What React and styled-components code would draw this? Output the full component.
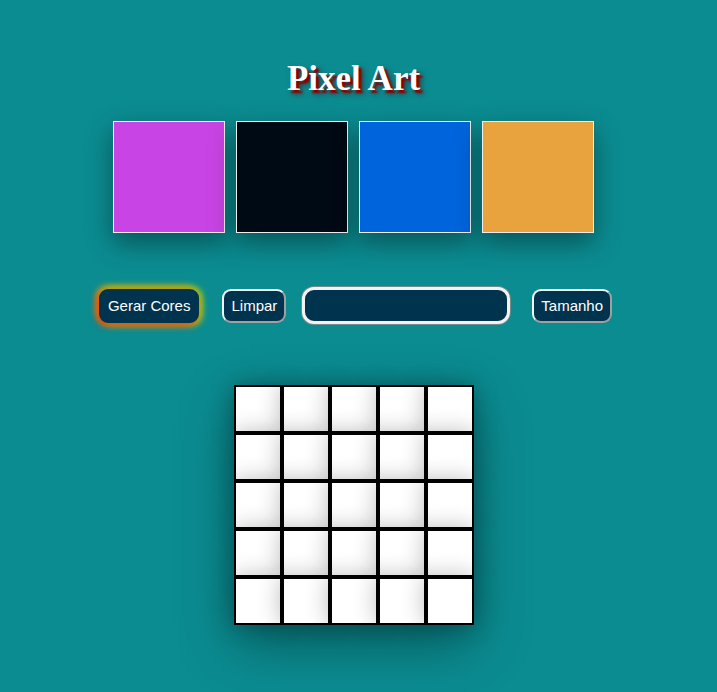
import React from 'react';
import styled, { createGlobalStyle } from 'styled-components';

const GlobalStyle = createGlobalStyle`
  html, body {
    margin: 0;
    padding: 0;
    background-color: #0b8c91;
  }
`;

const Page = styled.div`
  box-sizing: border-box;
  min-height: 100vh;
  padding: 59px 10px 0 0;
  display: flex;
  flex-direction: column;
  align-items: center;
`;

const Title = styled.h1`
  margin: 0 0 22px;
  font-family: 'Liberation Serif', 'Times New Roman', serif;
  font-size: 35px;
  line-height: 40px;
  font-weight: bold;
  color: #fff;
  text-shadow: 3px 3px 2px #8b0000, 4px 4px 6px rgba(60, 0, 0, 0.6);
`;

const Palette = styled.div`
  display: flex;
  gap: 11px;
`;

const ColorBox = styled.div`
  width: 110px;
  height: 110px;
  border: 1px solid #eee;
  background-color: ${(p) => p.$color};
  box-shadow: 0 10px 25px rgba(0, 0, 0, 0.4);
`;

const Controls = styled.div`
  display: flex;
  align-items: center;
  margin: 54px 0 0 4px;
`;

const Button = styled.button`
  margin: 0 ${(p) => p.$gap || 0}px 0 0;
  padding: 7px 7px;
  font-family: 'Liberation Sans', Arial, sans-serif;
  font-size: 15px;
  line-height: 16px;
  color: #fff;
  background-color: #00334e;
  border: 2px solid;
  border-color: ${(p) => (p.$glow ? '#00334e' : '#f4f4f4 #a0a0a0 #a0a0a0 #f4f4f4')};
  border-radius: 9px;
  cursor: pointer;
  box-shadow: ${(p) =>
    p.$glow
      ? '-2px 2px 7px #ff3000, 2px -2px 7px #86d81c, -2px -2px 7px #ff9a00, 2px 2px 7px #d8c800'
      : 'none'};
`;

const SizeInput = styled.input`
  width: 202px;
  height: 31px;
  margin-right: 22px;
  padding: 0;
  background-color: #00334e;
  border: 3px solid #f2f2f2;
  border-radius: 12px;
  box-shadow: 0 0 0 1px rgba(140, 140, 140, 0.8);
  outline: none;
  color: #fff;
`;

const Board = styled.div`
  display: grid;
  grid-template-columns: repeat(5, 48px);
  margin-top: 61px;
  box-shadow: 0 20px 50px rgba(0, 0, 0, 0.35);
`;

const Pixel = styled.div`
  width: 44px;
  height: 44px;
  border: 2px solid #000;
  background-color: #fff;
  box-shadow: 0 0 25px rgba(0, 0, 0, 0.3);
`;

const colors = ['#c944e4', '#000a14', '#0064dc', '#e8a23e'];

export default function App() {
  return (
    <>
      <GlobalStyle />
      <Page>
        <Title>Pixel Art</Title>
        <Palette>
          {colors.map((c) => (
            <ColorBox key={c} $color={c} />
          ))}
        </Palette>
        <Controls>
          <Button $glow $gap={23}>Gerar Cores</Button>
          <Button $gap={16}>Limpar</Button>
          <SizeInput type="number" />
          <Button>Tamanho</Button>
        </Controls>
        <Board>
          {Array.from({ length: 25 }).map((_, i) => (
            <Pixel key={i} />
          ))}
        </Board>
      </Page>
    </>
  );
}
